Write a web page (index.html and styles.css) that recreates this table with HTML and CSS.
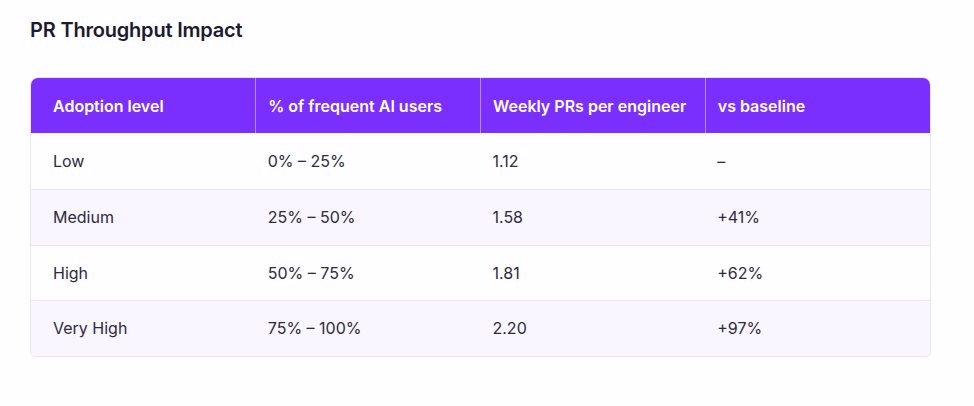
FILE: index.html
```html
<!DOCTYPE html>
<html lang="en">
<head>
<meta charset="utf-8">
<title>PR Throughput Impact</title>
<link rel="stylesheet" href="styles.css">
</head>
<body>
<main class="page">
  <h2 class="title">PR Throughput Impact</h2>
  <div class="table-wrap">
    <table class="data">
      <thead>
        <tr>
          <th>Adoption level</th>
          <th>% of frequent AI users</th>
          <th>Weekly PRs per engineer</th>
          <th>vs baseline</th>
        </tr>
      </thead>
      <tbody>
        <tr><td>Low</td><td>0% – 25%</td><td>1.12</td><td>–</td></tr>
        <tr><td>Medium</td><td>25% – 50%</td><td>1.58</td><td>+41%</td></tr>
        <tr><td>High</td><td>50% – 75%</td><td>1.81</td><td>+62%</td></tr>
        <tr><td>Very High</td><td>75% – 100%</td><td>2.20</td><td>+97%</td></tr>
      </tbody>
    </table>
  </div>
</main>
</body>
</html>
```

FILE: styles.css
```css
html, body {
  margin: 0;
  padding: 0;
  background: #fefdff;
}
body {
  font-family: Inter, "Noto Sans", "Liberation Sans", sans-serif;
  color: #2d2a3e;
}
.page {
  padding: 18px 43px 0 30px;
}
.title {
  margin: 0;
  font-size: 20px;
  line-height: 24px;
  font-weight: 600;
  color: #1c1a2e;
  letter-spacing: -0.2px;
}
.table-wrap {
  margin-top: 35px;
  border: 1px solid #ece4fb;
  border-radius: 8px 8px 5px 5px;
  overflow: hidden;
}
.data {
  width: 100%;
  border-collapse: collapse;
  table-layout: fixed;
}
.data th {
  background: #7b2ffe;
  color: #ffffff;
  font-weight: 600;
  font-size: 16px;
  text-align: left;
  height: 55px;
  padding: 0 12px;
  border-left: 1px solid rgba(255, 255, 255, 0.45);
}
.data th:first-child {
  border-left: none;
  padding-left: 22px;
}
.data td {
  font-size: 16px;
  font-weight: 400;
  height: 54.5px;
  padding: 0 12px;
  border-top: 1px solid #ece4fb;
}
.data td:first-child {
  padding-left: 22px;
}
.data tbody tr:first-child td {
  border-top: none;
  height: 56px;
}
.data tbody tr:nth-child(even) td {
  background: #faf6ff;
}
```
